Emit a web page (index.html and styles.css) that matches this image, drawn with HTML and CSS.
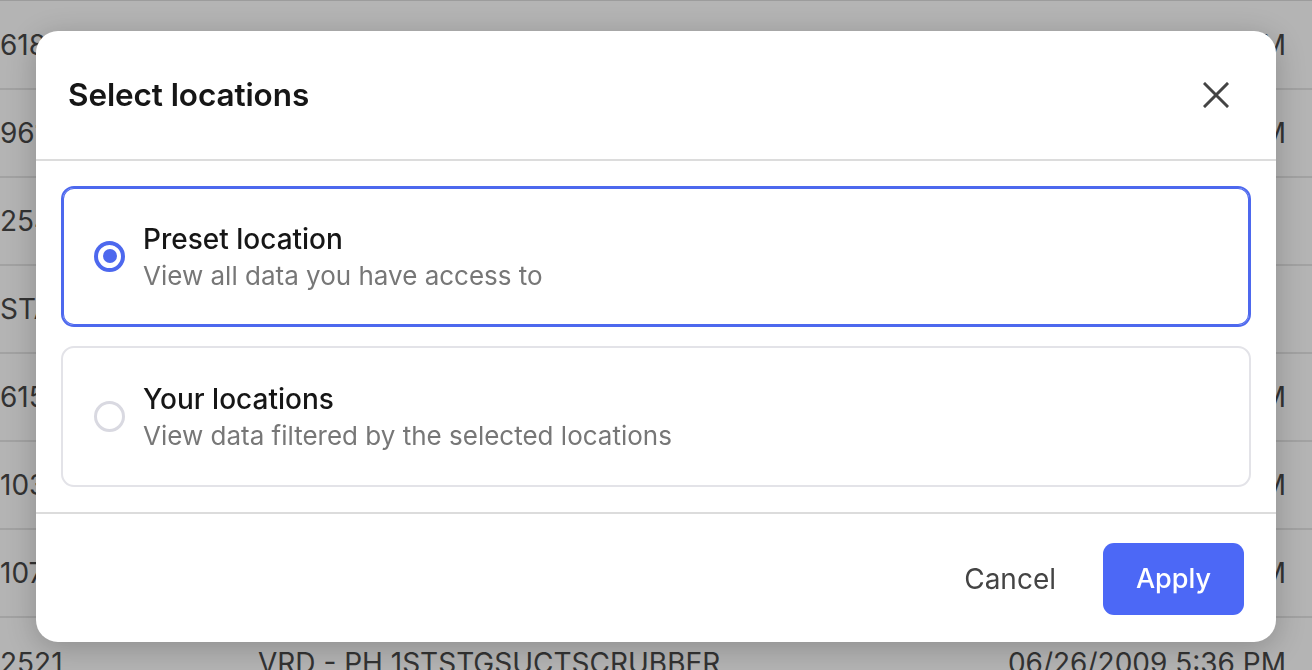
FILE: index.html
```html
<!DOCTYPE html>
<html lang="en">
<head>
<meta charset="utf-8">
<title>Select locations</title>
<link rel="stylesheet" href="styles.css">
</head>
<body>
<div class="table">
  <div class="row"><span class="c1">618</span><span class="c2"></span><span class="c3">06/26/2009 5:36 PM</span></div>
  <div class="row"><span class="c1">961</span><span class="c2"></span><span class="c3">06/26/2009 5:36 PM</span></div>
  <div class="row"><span class="c1">254</span><span class="c2"></span><span class="c3"></span></div>
  <div class="row"><span class="c1">STA</span><span class="c2"></span><span class="c3"></span></div>
  <div class="row"><span class="c1">615</span><span class="c2"></span><span class="c3">06/26/2009 5:36 PM</span></div>
  <div class="row"><span class="c1">103</span><span class="c2"></span><span class="c3">06/26/2009 5:36 PM</span></div>
  <div class="row"><span class="c1">107</span><span class="c2"></span><span class="c3">06/26/2009 5:36 PM</span></div>
  <div class="row last"><span class="c1">2521</span><span class="c2">VRD - PH 1STSTGSUCTSCRUBBER</span><span class="c3">06/26/2009 5:36 PM</span></div>
</div>

<div class="overlay">
  <div class="modal" role="dialog" aria-labelledby="modal-title">
    <div class="modal-header">
      <h2 id="modal-title" class="modal-title">Select locations</h2>
      <button class="close-btn" aria-label="Close">
        <svg width="26" height="26" viewBox="0 0 26 26" fill="none" stroke="#444" stroke-width="3" stroke-linecap="square">
          <path d="M2 2 L24 24 M24 2 L2 24"/>
        </svg>
      </button>
    </div>
    <div class="modal-body">
      <label class="option selected">
        <span class="radio checked"><span class="dot"></span></span>
        <span class="option-text">
          <span class="option-title">Preset location</span>
          <span class="option-desc">View all data you have access to</span>
        </span>
      </label>
      <label class="option">
        <span class="radio"></span>
        <span class="option-text">
          <span class="option-title">Your locations</span>
          <span class="option-desc">View data filtered by the selected locations</span>
        </span>
      </label>
    </div>
    <div class="modal-footer">
      <button class="btn-cancel">Cancel</button>
      <button class="btn-apply">Apply</button>
    </div>
  </div>
</div>
</body>
</html>
```

FILE: styles.css
```css
* { box-sizing: border-box; }

html, body {
  margin: 0;
  padding: 0;
  height: 100%;
  overflow: hidden;
}

body {
  background: #b4b4b4;
  font-family: Inter, "Noto Sans", sans-serif;
  color: #1b1b1b;
}

.table {
  padding-top: 1px;
  border-top: 1px solid #9c9c9c;
}

.row {
  height: 88px;
  border-bottom: 2px solid #a2a2a2;
  display: flex;
  align-items: center;
  font-size: 28px;
  color: #333;
  white-space: nowrap;
}

.row.last {
  align-items: flex-start;
  padding-top: 28px;
}

.c1 { width: 258px; flex: none; }
.c2 { flex: 1; }
.c3 { width: 320px; text-align: right; padding-right: 26px; flex: none; }

.overlay {
  position: fixed;
  inset: 0;
  display: flex;
  align-items: center;
  justify-content: center;
}

.modal {
  width: 1240px;
  height: 611px;
  margin-top: 2px;
  background: #fff;
  border-radius: 22px;
  box-shadow: 0 6px 30px rgba(0, 0, 0, 0.22);
  display: flex;
  flex-direction: column;
  overflow: hidden;
}

.modal-header {
  height: 130px;
  flex: none;
  display: flex;
  align-items: center;
  justify-content: space-between;
  padding: 0 40px 0 32px;
  border-bottom: 2px solid #dcdcdc;
}

.modal-title {
  margin: 0;
  font-size: 31.5px;
  font-weight: 600;
  color: #161616;
  letter-spacing: -0.1px;
}

.close-btn {
  width: 40px;
  height: 40px;
  padding: 0;
  border: 0;
  background: none;
  display: flex;
  align-items: center;
  justify-content: center;
}

.modal-body {
  flex: none;
  padding: 25px 25px 25px;
  display: flex;
  flex-direction: column;
  gap: 19px;
  border-bottom: 2px solid #dcdcdc;
}

.option {
  height: 141px;
  border: 2px solid #e3e3e8;
  border-radius: 13px;
  display: flex;
  align-items: center;
  padding: 0 0 0 31px;
  gap: 18px;
}

.option.selected {
  border-color: #4d68ee;
  box-shadow: inset 0 0 0 1px #4d68ee;
}

.radio {
  width: 31px;
  height: 31px;
  border-radius: 50%;
  border: 3px solid #d9d9e1;
  flex: none;
  display: flex;
  align-items: center;
  justify-content: center;
}

.radio.checked {
  border: 4px solid #4d68ee;
}

.dot {
  width: 14px;
  height: 14px;
  border-radius: 50%;
  background: #4d68ee;
}

.option-text {
  display: flex;
  flex-direction: column;
  gap: 5px;
  padding-top: 3px;
}

.option-title {
  font-size: 28px;
  font-weight: 500;
  color: #161616;
  line-height: 32px;
}

.option-desc {
  font-size: 26px;
  color: #777;
  line-height: 32px;
}

.modal-footer {
  flex: 1;
  display: flex;
  align-items: center;
  justify-content: flex-end;
  padding: 2px 32px 0 0;
  gap: 47px;
}

.btn-cancel {
  border: 0;
  background: none;
  padding: 0;
  font-family: inherit;
  font-size: 28px;
  color: #444;
}

.btn-apply {
  width: 141px;
  height: 72px;
  border: 0;
  border-radius: 11px;
  background: #4c68f6;
  color: #fff;
  font-family: inherit;
  font-size: 27px;
  font-weight: 500;
}
```
